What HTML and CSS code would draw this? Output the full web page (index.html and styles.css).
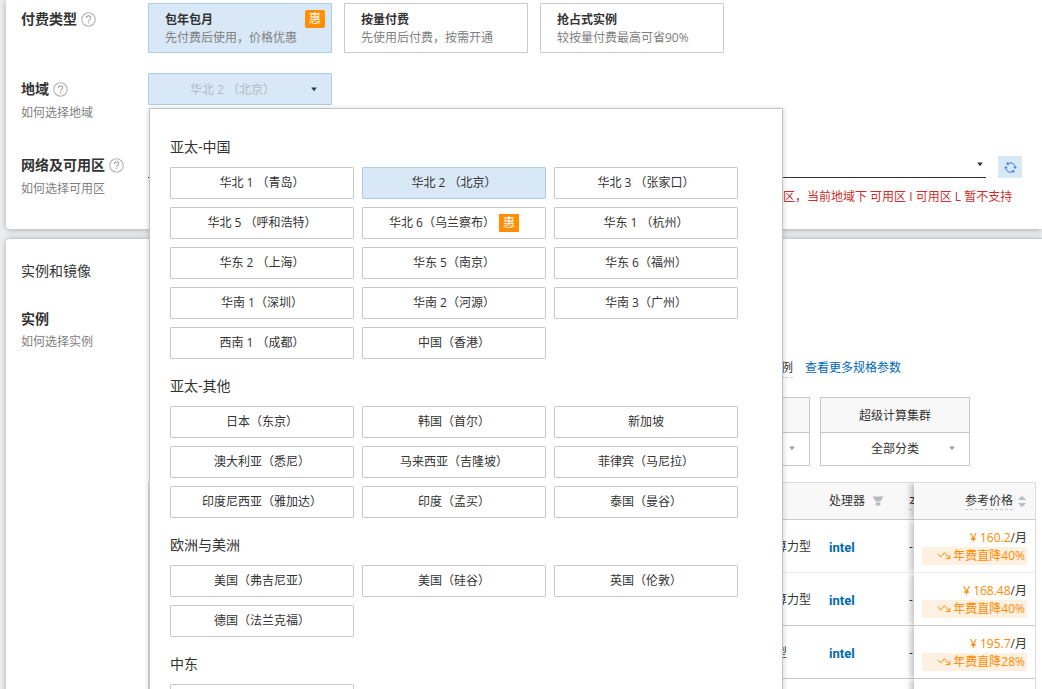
FILE: index.html
```html
<!DOCTYPE html>
<html lang="zh-CN">
<head>
<meta charset="utf-8">
<title>付费类型</title>
<link rel="stylesheet" href="styles.css">
</head>
<body>
<svg class="sprite" aria-hidden="true">
  <symbol id="help" viewBox="0 0 15 15"><circle cx="7.5" cy="7.5" r="6.7" fill="none" stroke="#b4b4b4" stroke-width="1.1"/><path d="M5.3 6.1C5.3 4.7 6.2 3.9 7.5 3.9s2.2.8 2.2 1.9c0 1.5-2.1 1.6-2.1 3.4M7.5 10.3v1.2" fill="none" stroke="#a6a6a6" stroke-width="1.1"/></symbol>
  <symbol id="caret" viewBox="0 0 8 5"><path d="M1.2 0.5h5.6L4 4.2z" fill="currentColor"/></symbol>
  <symbol id="trend" viewBox="0 0 14 9"><path d="M.5 2.8 3.8 6l3.6-4.4 4.8 5.6M8.8 7.6h4V3.8" fill="none" stroke="#ff8a00" stroke-width="1"/></symbol>
</svg>
<main class="page">
  <section class="card card-basic">
    <div class="row">
      <div class="label"><h3>付费类型<svg class="help"><use href="#help"/></svg></h3></div>
      <div class="plans">
        <button class="plan selected"><strong>包年包月</strong><span>先付费后使用，价格优惠</span><em class="tag plan-tag">惠</em></button>
        <button class="plan"><strong>按量付费</strong><span>先使用后付费，按需开通</span></button>
        <button class="plan"><strong>抢占式实例</strong><span>较按量付费最高可省90%</span></button>
      </div>
    </div>
    <div class="row row-region">
      <div class="label"><h3>地域<svg class="help"><use href="#help"/></svg></h3><a href="#">如何选择地域</a></div>
      <div class="region">
        <button class="region-toggle" aria-expanded="true"><span>华北 2 （北京）</span><svg class="caret"><use href="#caret"/></svg></button>
        <div class="popup">
          <h4>亚太-中国</h4>
          <div class="options">
            <button>华北 1 （青岛）</button><button class="selected">华北 2 （北京）</button><button>华北 3 （张家口）</button>
            <button>华北 5 （呼和浩特）</button><button>华北 6（乌兰察布）<em class="tag">惠</em></button><button>华东 1 （杭州）</button>
            <button>华东 2 （上海）</button><button>华东 5（南京）</button><button>华东 6（福州）</button>
            <button>华南 1（深圳）</button><button>华南 2（河源）</button><button>华南 3（广州）</button>
            <button>西南 1 （成都）</button><button>中国（香港）</button>
          </div>
          <h4>亚太-其他</h4>
          <div class="options">
            <button>日本（东京）</button><button>韩国（首尔）</button><button>新加坡</button>
            <button>澳大利亚（悉尼）</button><button>马来西亚（吉隆坡）</button><button>菲律宾（马尼拉）</button>
            <button>印度尼西亚（雅加达）</button><button>印度（孟买）</button><button>泰国（曼谷）</button>
          </div>
          <h4>欧洲与美洲</h4>
          <div class="options">
            <button>美国（弗吉尼亚）</button><button>美国（硅谷）</button><button>英国（伦敦）</button>
            <button>德国（法兰克福）</button>
          </div>
          <h4>中东</h4>
          <div class="options"><button></button></div>
        </div>
      </div>
    </div>
    <div class="row row-zone">
      <div class="label"><h3>网络及可用区<svg class="help"><use href="#help"/></svg></h3><a href="#">如何选择可用区</a></div>
      <div class="zone">
        <div class="zone-line">
          <button class="zone-select"><svg class="caret"><use href="#caret"/></svg></button>
          <button class="refresh"><svg viewBox="0 0 14 14"><path d="M3.6 3.2A5.1 5.1 0 0 1 12.1 7.4M10.4 10.8A5.1 5.1 0 0 1 1.9 6.6M13.2 6.2l-1.1 1.7-1.8-1.2M.8 7.8l1.1-1.7 1.8 1.2M3.4 1.4v2.1h2.1M10.6 12.6v-2.1H8.5" fill="none" stroke="#1f6fc4" stroke-width="1"/></svg></button>
        </div>
        <p class="error">区，当前地域下 可用区 I 可用区 L 暂不支持</p>
      </div>
    </div>
  </section>

  <section class="card card-instance">
    <h2>实例和镜像</h2>
    <div class="row">
      <div class="label"><h3>实例</h3><a href="#">如何选择实例</a></div>
      <div class="instance">
        <div class="links"><span>例</span><a href="#">查看更多规格参数</a></div>
        <div class="families">
          <div class="family"><div class="family-name"></div><button class="family-more"><svg class="caret"><use href="#caret"/></svg></button></div>
          <div class="family">
            <label class="family-name" for="cluster">超级计算集群</label>
            <div class="family-more"><select id="cluster"><option>全部分类</option></select><svg class="caret"><use href="#caret"/></svg></div>
          </div>
        </div>
        <div class="table-wrap">
          <table>
            <colgroup><col class="c-type"><col class="c-cpu"><col class="c-disk"><col class="c-price"></colgroup>
            <thead><tr>
              <th></th>
              <th>处理器<svg class="filter" viewBox="0 0 12 11"><path d="M.5.5h11L8.3 5.4H3.7zM3.8 6.6h4.4v3H3.8z" fill="#b9b9b9"/></svg></th>
              <th><span class="hint">本</span></th>
              <th class="price"><span class="hint">参考价格</span><svg class="sort" viewBox="0 0 10 13"><path d="M5 .8 9.2 5H.8zM.8 8h8.4L5 12.2z" fill="#bdbdbd"/></svg></th>
            </tr></thead>
            <tbody>
              <tr><td class="type">算力型</td><td class="intel">intel</td><td class="dash">-</td><td class="price"><div><b>¥ 160.2</b>/月</div><div class="off"><svg class="trend"><use href="#trend"/></svg>年费直降40%</div></td></tr>
              <tr><td class="type">算力型</td><td class="intel">intel</td><td class="dash">-</td><td class="price"><div><b>¥ 168.48</b>/月</div><div class="off"><svg class="trend"><use href="#trend"/></svg>年费直降40%</div></td></tr>
              <tr><td class="type">型</td><td class="intel">intel</td><td class="dash">-</td><td class="price"><div><b>¥ 195.7</b>/月</div><div class="off"><svg class="trend"><use href="#trend"/></svg>年费直降28%</div></td></tr>
              <tr><td></td><td></td><td></td><td class="price"></td></tr>
            </tbody>
          </table>
        </div>
      </div>
    </div>
  </section>
</main>
</body>
</html>
```
FILE: styles.css
```css
* { box-sizing: border-box; }
body {
  margin: 0;
  height: 100vh;
  overflow: hidden;
  background: #eceeef;
  color: #333;
  font: 12px/18px "Open Sans", "Noto Sans CJK SC", sans-serif;
}
button, select { font: inherit; color: inherit; margin: 0; padding: 0; background: none; border: 0; cursor: pointer; }
h2, h3, h4, p { margin: 0; }
a { color: #808080; text-decoration: none; }
svg { flex: none; }
.sprite { position: absolute; width: 0; height: 0; }

.page { display: flex; flex-direction: column; gap: 9px; height: 100vh; overflow: hidden; padding-left: 6px; }
.card { flex: none; background: #fff; box-shadow: 0 1px 6px rgba(0, 0, 0, .28); padding-left: 15px; }
.card-basic { padding-top: 3px; padding-bottom: 23px; border-radius: 0 0 0 4px; }
.card-instance { border-top: 1px solid #c9cbcc; border-radius: 4px 0 0 0; padding-top: 21px; }
.card-instance h2 { font-size: 14px; font-weight: 400; line-height: 22px; margin-bottom: 26px; }
.row { display: grid; grid-template-columns: 127px 1fr; }
.row-region { margin-top: 20px; }
.row-zone { margin-top: 31px; padding-right: 20px; }
.label h3 { display: flex; align-items: center; gap: 4px; font-size: 14px; line-height: 22px; }
.label a { display: block; line-height: 20px; padding-top: 3px; }
.help { width: 15px; height: 15px; }
.caret { width: 8px; height: 5px; }
.card-basic .row:first-child .label { padding-top: 5px; }
.row-region .label { padding-top: 5px; }
.card-instance .label a { padding-top: 2px; }

.tag { width: 20px; height: 18px; background: #ff8f00; color: #fff; font-style: normal; line-height: 18px; text-align: center; }
.plans { display: flex; gap: 12px; }
.plan {
  position: relative;
  display: flex;
  flex-direction: column;
  width: 184px;
  height: 50px;
  padding: 7px 16px 5px;
  border: 1px solid #c8c8c8;
  border-radius: 1px;
  text-align: left;
}
.plan span { color: #808080; white-space: nowrap; }
.plan-tag { position: absolute; top: 6px; right: 6px; border-radius: 2px; }
.selected, .plan.selected, .options .selected { background: #d8e8f6; border-color: #a9cdea; }

.region { position: relative; width: 184px; }
.region-toggle {
  display: flex;
  align-items: center;
  width: 100%;
  height: 32px;
  padding: 1px 13px 0 6px;
  background: #d8e8f6;
  border: 1px solid #a9cdea;
  border-radius: 1px;
}
.region-toggle span { flex: 1; color: #b3bac0; }
.popup {
  position: absolute;
  z-index: 10;
  top: 35px;
  left: 1px;
  width: 634px;
  padding: 28px 20px 40px;
  background: #fff;
  border: 1px solid #c4c4c4;
  box-shadow: 0 1px 6px rgba(0, 0, 0, .2);
}
.popup h4 { font-size: 14px; font-weight: 400; line-height: 20px; }
.options { display: grid; grid-template-columns: repeat(3, 184px); gap: 8px; padding: 10px 0 17px; }
.options button {
  display: flex;
  align-items: center;
  justify-content: center;
  gap: 4px;
  height: 32px;
  border: 1px solid #c8c8c8;
  border-radius: 1px;
  white-space: nowrap;
}

.zone-line { display: flex; gap: 12px; }
.zone-select { display: flex; flex: 1; align-items: center; justify-content: flex-end; height: 24px; padding: 0 2px 2px 0; border-bottom: 1px solid #333; }
.refresh { display: grid; place-items: center; width: 24px; height: 22px; margin-top: 2px; background: #d8e8f6; }
.refresh svg { width: 13px; height: 13px; }
.error { color: #c9302c; padding: 10px 0 0 635px; white-space: nowrap; }

.instance { padding: 51px 6px 0 0; min-width: 0; }
.links { display: flex; gap: 12px; padding-left: 633px; white-space: nowrap; }
.links span, .hint { border-bottom: 1px dashed #ccc; }
.links a { color: #0068b7; }
.families { display: flex; gap: 10px; margin-top: 19px; padding-left: 512px; }
.family { width: 150px; border: 1px solid #c8c8c8; }
.family-name { display: block; height: 35px; line-height: 36px; text-align: center; background: #f8f8f8; border-bottom: 1px solid #c8c8c8; }
.family-more { position: relative; display: block; width: 100%; height: 32px; }
.family-more select { width: 100%; height: 32px; appearance: none; text-align: center; text-align-last: center; }
.family-more .caret { position: absolute; top: 13px; right: 13px; color: #999; pointer-events: none; }

.table-wrap { margin-top: 16px; overflow: hidden; border: 1px solid #dcdcdc; }
table { width: 100%; min-width: 885px; table-layout: fixed; border-collapse: separate; border-spacing: 0; }
.c-cpu { width: 80px; }
.c-disk { width: 5px; }
.c-price { width: 121px; }
th, td { padding: 0; text-align: left; white-space: nowrap; font-weight: 400; border-bottom: 1px solid #c8c8c8; overflow: hidden; }
th { height: 37px; background: #f8f8f8; }
td { height: 53px; padding-top: 1px; }
tbody tr:first-child td { border-bottom-color: #ececec; }
.type { padding-left: 626px; }
.filter { width: 12px; height: 11px; margin-left: 7px; vertical-align: -2px; }
.intel { padding-top: 3px; color: #0068b5; font: 700 13px/18px Roboto, sans-serif; }
.price { position: sticky; z-index: 1; right: 0; padding-right: 8px; text-align: right; background: #fff; box-shadow: -3px 0 6px rgba(0, 0, 0, .25); clip-path: inset(0 0 0 -12px); }
th.price { background: #f8f8f8; }
.sort { width: 10px; height: 13px; margin-left: 4px; vertical-align: -3px; }
.price b { color: #ff8a00; font-weight: 400; }
.off { display: flex; align-items: center; justify-content: flex-end; gap: 2px; margin-left: 8px; padding-right: 2px; color: #ff8a00; background: #fff1e2; }
.trend { width: 14px; height: 9px; }
```
